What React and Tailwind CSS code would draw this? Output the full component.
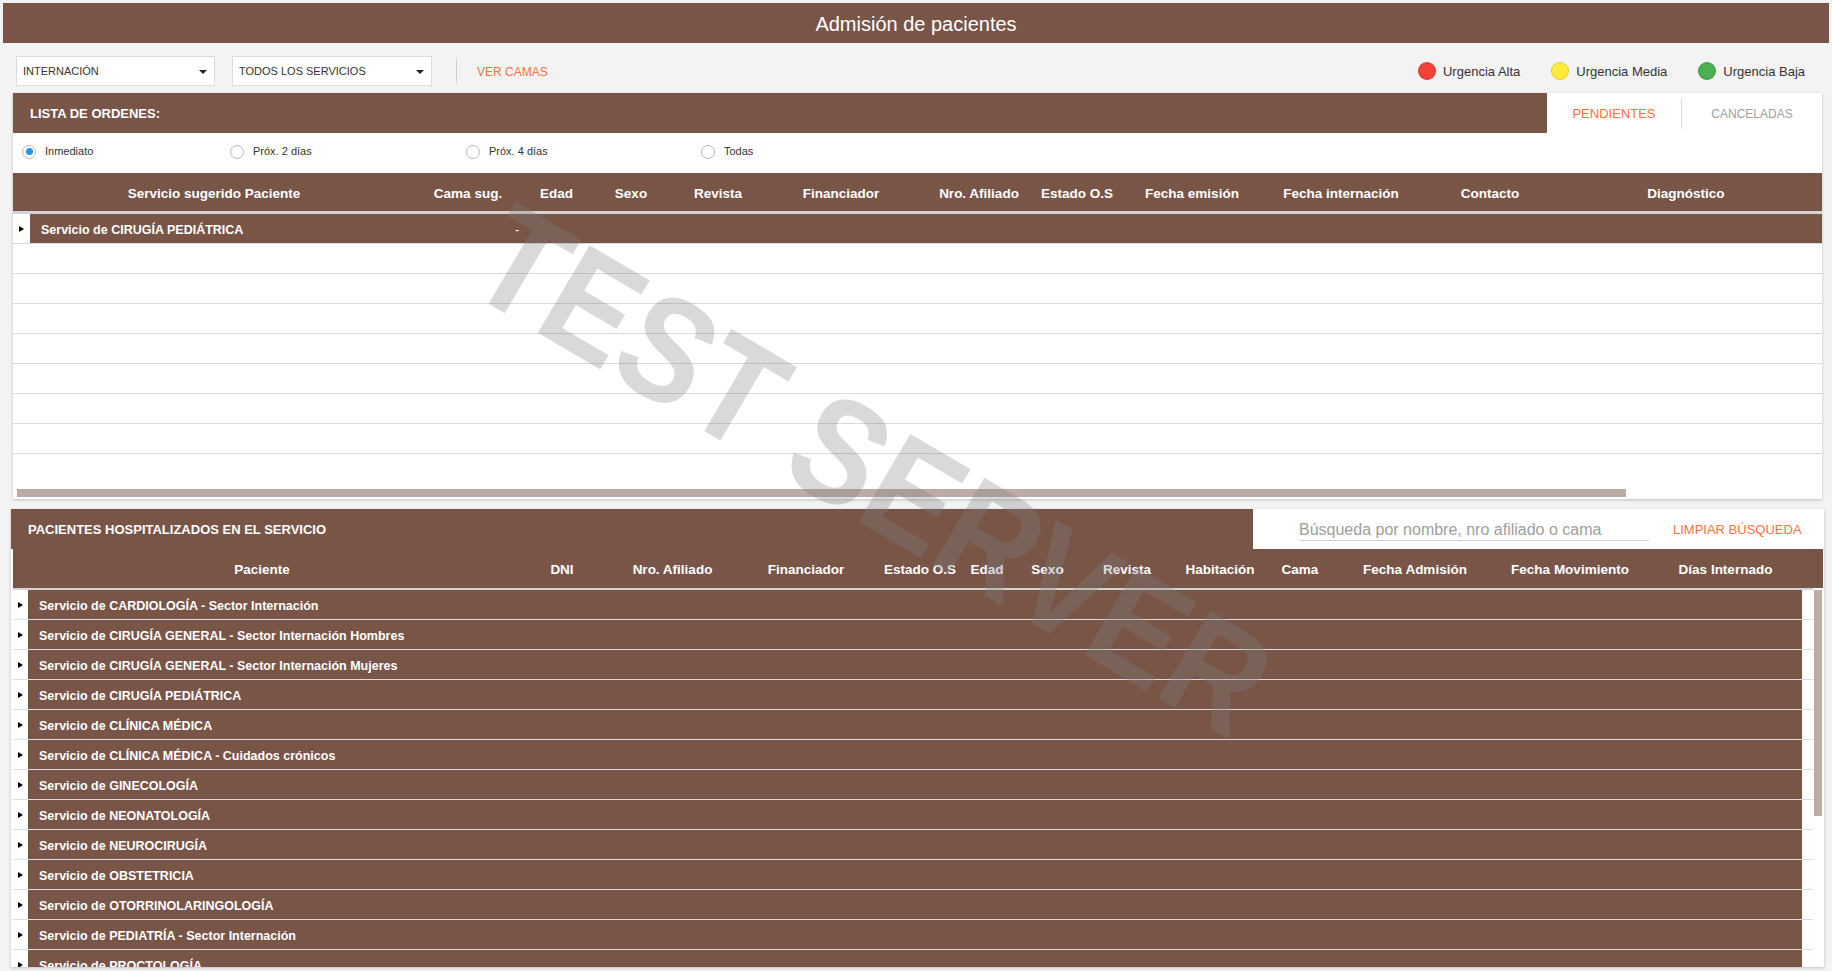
import React from "react";

const BROWN = "bg-[#795548]";

const upperCols = [
  ["Servicio sugerido Paciente", "w-[402px]"],
  ["Cama sug.", "w-[106px]"],
  ["Edad", "w-[71px]"],
  ["Sexo", "w-[78px]"],
  ["Revista", "w-[96px]"],
  ["Financiador", "w-[150px]"],
  ["Nro. Afiliado", "w-[126px]"],
  ["Estado O.S", "w-[70px]"],
  ["Fecha emisión", "w-[160px]"],
  ["Fecha internación", "w-[138px]"],
  ["Contacto", "w-[160px]"],
  ["Diagnóstico", "w-[232px]"],
];

const lowerCols = [
  ["Paciente", "w-[498px]"],
  ["DNI", "w-[102px]"],
  ["Nro. Afiliado", "w-[119px]"],
  ["Financiador", "w-[148px]"],
  ["Estado O.S", "w-[80px]"],
  ["Edad", "w-[54px]"],
  ["Sexo", "w-[67px]"],
  ["Revista", "w-[92px]"],
  ["Habitación", "w-[94px]"],
  ["Cama", "w-[66px]"],
  ["Fecha Admisión", "w-[164px]"],
  ["Fecha Movimiento", "w-[146px]"],
  ["Días Internado", "w-[165px]"],
];

const services = [
  "Servicio de CARDIOLOGÍA - Sector Internación",
  "Servicio de CIRUGÍA GENERAL - Sector Internación Hombres",
  "Servicio de CIRUGÍA GENERAL - Sector Internación Mujeres",
  "Servicio de CIRUGÍA PEDIÁTRICA",
  "Servicio de CLÍNICA MÉDICA",
  "Servicio de CLÍNICA MÉDICA - Cuidados crónicos",
  "Servicio de GINECOLOGÍA",
  "Servicio de NEONATOLOGÍA",
  "Servicio de NEUROCIRUGÍA",
  "Servicio de OBSTETRICIA",
  "Servicio de OTORRINOLARINGOLOGÍA",
  "Servicio de PEDIATRÍA - Sector Internación",
  "Servicio de PROCTOLOGÍA",
];

function Caret() {
  return (
    <div className="w-0 h-0 border-y-[3.5px] border-y-transparent border-l-[5px] border-l-black" />
  );
}

function Dropdown({ label, w }) {
  return (
    <div
      className={`${w} h-[30px] shrink-0 flex items-center justify-between bg-white border border-[#dcdcdc] pl-[6px] pr-[7px] pt-[1px] text-[11px] text-[#333]`}
    >
      <span>{label}</span>
      <div className="w-0 h-0 border-x-[4px] border-x-transparent border-t-[4px] border-t-[#222]" />
    </div>
  );
}

function Legend({ color, label, first }) {
  return (
    <div className={`flex items-center ${first ? "" : "ml-[31px]"}`}>
      <div className={`w-[18px] h-[18px] rounded-full ${color} border border-[rgba(0,0,0,0.12)]`} />
      <span className="ml-[7px] pt-[2px] text-[13px] text-[#333]">{label}</span>
    </div>
  );
}

function Radio({ label, checked, w }) {
  return (
    <div className={`${w} shrink-0 flex items-center`}>
      <div className="w-[14px] h-[14px] rounded-full border border-[#b8b8b8] bg-white flex items-center justify-center">
        {checked && <div className="w-[7px] h-[7px] rounded-full bg-[#2196f3]" />}
      </div>
      <span className="ml-[9px] text-[11px] text-[#333]">{label}</span>
    </div>
  );
}

export default function App() {
  return (
    <div className="relative w-[1832px] h-[971px] overflow-hidden bg-[#f3f3f3] font-['Liberation_Sans',Arial,sans-serif] text-[#333]">
      {/* Title */}
      <div className={`mx-[3px] mt-[3px] h-[40px] pt-[2px] ${BROWN} flex items-center justify-center text-white text-[20px]`}>
        Admisión de pacientes
      </div>

      {/* Toolbar */}
      <div className="mt-[13px] h-[30px] flex items-center pl-[16px] pr-[27px]">
        <Dropdown label="INTERNACIÓN" w="w-[199px]" />
        <div className="ml-[17px]">
          <Dropdown label="TODOS LOS SERVICIOS" w="w-[200px]" />
        </div>
        <div className="ml-[24px] w-px h-[24px] bg-[#d0d0d0]" />
        <div className="ml-[20px] pt-[2px] text-[12px] text-[#ff7043]">VER CAMAS</div>
        <div className="flex-1" />
        <Legend first color="bg-[#f44336]" label="Urgencia Alta" />
        <Legend color="bg-[#ffeb3b]" label="Urgencia Media" />
        <Legend color="bg-[#4caf50]" label="Urgencia Baja" />
      </div>

      {/* Upper card */}
      <div className="ml-[13px] mt-[7px] w-[1809px] h-[406px] bg-white shadow-[0_1px_3px_rgba(0,0,0,0.22)] flex flex-col">
        <div className="h-[40px] shrink-0 flex">
          <div className={`w-[1534px] ${BROWN} flex items-center pl-[17px] pt-[2px] text-white text-[13px] font-bold`}>
            LISTA DE ORDENES:
          </div>
          <div className="w-[134px] flex items-center justify-center pt-[2px] text-[13px] text-[#ff7043]">PENDIENTES</div>
          <div className="w-px h-[31px] mt-[5px] bg-[#dddddd]" />
          <div className="flex-1 flex items-center justify-center pt-[2px] text-[12px] text-[#9e9e9e]">CANCELADAS</div>
        </div>

        <div className="h-[40px] shrink-0 flex items-center pl-[9px] pb-[3px]">
          <Radio checked label="Inmediato" w="w-[208px]" />
          <Radio label="Próx. 2 días" w="w-[236px]" />
          <Radio label="Próx. 4 días" w="w-[235px]" />
          <Radio label="Todas" w="w-[200px]" />
        </div>

        <div className={`h-[41px] shrink-0 ${BROWN} border-b-[3px] border-[#d4d4d4] flex overflow-hidden pt-[4px] text-white text-[13.5px] font-bold`}>
          {upperCols.map(([t, w]) => (
            <div key={t} className={`${w} shrink-0 flex items-center justify-center whitespace-nowrap`}>
              <span>{t}</span>
            </div>
          ))}
        </div>

        <div className="h-[30px] shrink-0 flex border-b border-[#d9d9d9]">
          <div className="w-[17px] bg-white flex items-center justify-center">
            <Caret />
          </div>
          <div className={`flex-1 ${BROWN} flex items-center pl-[11px] pt-[3px] text-white text-[12.5px] font-bold`}>
            <span className="w-[474px]">Servicio de CIRUGÍA PEDIÁTRICA</span>
            <span className="font-normal">-</span>
          </div>
        </div>

        {[0, 1, 2, 3, 4, 5, 6].map((i) => (
          <div key={i} className="h-[30px] shrink-0 border-b border-[#d9d9d9]" />
        ))}

        <div className="flex-1" />
        <div className="ml-[4px] w-[1609px] h-[8px] shrink-0 bg-[#bcaaa4]" />
        <div className="h-[2px] shrink-0" />
      </div>

      {/* Lower card */}
      <div className="ml-[11px] mt-[10px] w-[1813px] h-[458px] bg-white shadow-[0_1px_3px_rgba(0,0,0,0.22)] flex flex-col overflow-hidden">
        <div className="h-[40px] shrink-0 flex">
          <div className={`w-[1242px] ${BROWN} flex items-center pl-[17px] pt-[2px] text-white text-[13px] font-bold`}>
            PACIENTES HOSPITALIZADOS EN EL SERVICIO
          </div>
          <div className="flex-1 flex items-start">
            <div className="ml-[46px] mt-[8px] w-[350px] h-[24px] pt-[3px] border-b border-[#cfcfcf] flex items-center text-[16px] text-[#9e9e9e] whitespace-nowrap">
              Búsqueda por nombre, nro afiliado o cama
            </div>
            <div className="ml-[24px] self-center pt-[2px] text-[13px] text-[#ff7043]">LIMPIAR BÚSQUEDA</div>
          </div>
        </div>

        <div className={`ml-[2px] w-[1810px] h-[39px] shrink-0 ${BROWN} flex overflow-hidden pt-[3px] text-white text-[13.5px] font-bold`}>
          {lowerCols.map(([t, w]) => (
            <div key={t} className={`${w} shrink-0 flex items-center justify-center whitespace-nowrap`}>
              <span>{t}</span>
            </div>
          ))}
        </div>
        <div className="ml-[2px] w-[1800px] h-[2px] shrink-0 bg-[#d4d4d4]" />

        <div className="flex flex-1 min-h-0">
          <div className="ml-[2px] w-[1800px] overflow-hidden">
            {services.map((s) => (
              <div key={s} className="h-[30px] flex border-b border-[#dcdcdc]">
                <div className="w-[15px] bg-white flex items-center justify-center">
                  <Caret />
                </div>
                <div className={`w-[1774px] ${BROWN} flex items-center pl-[11px] pt-[4px] text-white text-[12.5px] font-bold whitespace-nowrap`}>
                  {s}
                </div>
              </div>
            ))}
          </div>
          <div className="ml-[1px] w-[8px]">
            <div className="h-[226px] bg-[#bcaaa4]" />
          </div>
        </div>
      </div>

      {/* Watermark */}
      <div className="pointer-events-none absolute left-[873px] top-[471px] -translate-x-1/2 -translate-y-1/2 rotate-[30.5deg] scale-x-[0.87] whitespace-nowrap text-[148px] leading-none font-bold text-[rgba(128,128,128,0.3)]">
        TEST SERVER
      </div>
    </div>
  );
}
